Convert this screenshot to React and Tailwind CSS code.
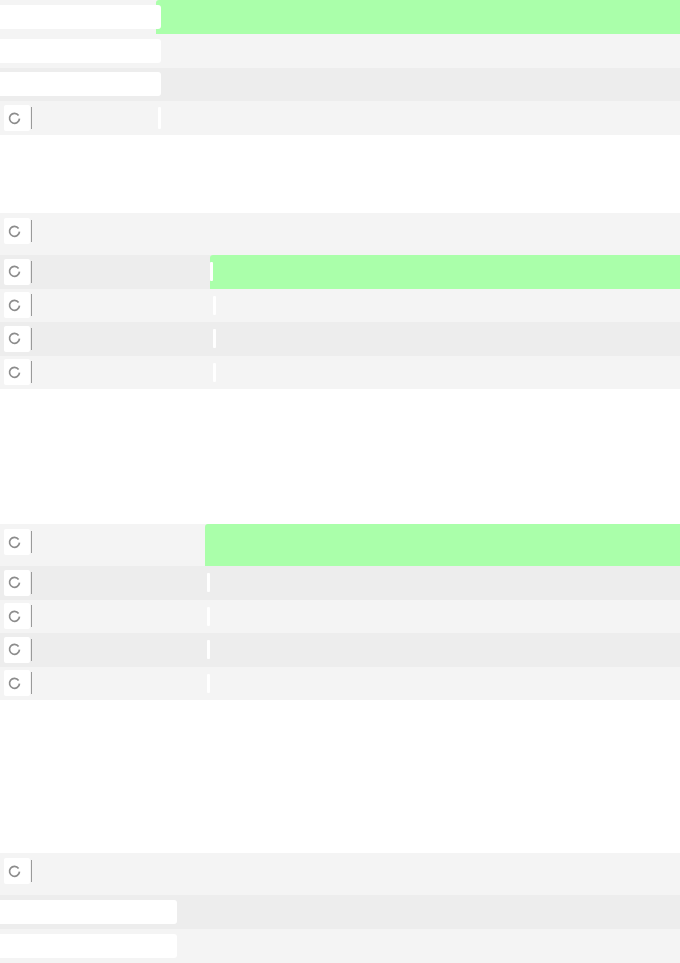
import React from 'react';

function Spinner() {
  return (
    <div className="flex items-center shrink-0">
      <div className="ml-1 w-[26px] h-[26px] bg-white rounded-[2px] flex items-center pl-[4px]">
        <svg width="13" height="13" viewBox="0 0 13 13">
          <path d="M10.6 3.4 A5 5 0 1 0 11.5 6.6" fill="none" stroke="#8c8c8c" strokeWidth="1.7" />
        </svg>
      </div>
      <div className="ml-[1px] w-px h-[22px] bg-[#9a9a9a]" />
    </div>
  );
}

function Handle({ tall }) {
  return <div className={`w-[3px] ${tall ? 'h-[22px]' : 'h-[19px]'} bg-white rounded-[1px]`} />;
}

function Row({ h = 'h-[33.5px]', bg, left, green, handle, leftW, top }) {
  return (
    <div className={`flex ${h} ${bg}`}>
      <div className={`${leftW} shrink-0 flex ${top ? 'items-start pt-[5px]' : 'items-center'}`}>{left}</div>
      <div className={`flex-1 flex items-center ${green ? 'bg-[#aaffaa] rounded-tl-[3px]' : ''}`}>
        {handle && <Handle tall={handle === 'tall'} />}
      </div>
    </div>
  );
}

const Box = ({ w }) => <div className={`${w} h-6 bg-white rounded-r-[3px] relative z-10`} />;

export default function App() {
  return (
    <div className="w-[680px] h-[963px] bg-white overflow-hidden font-['Liberation_Sans',sans-serif]">
      {/* block 1 */}
      <div className="flex h-[33.75px] bg-[#f4f4f4]">
        <div className="w-[156px] shrink-0 flex items-center">
          <Box w="w-[161px] shrink-0" />
        </div>
        <div className="flex-1 bg-[#aaffaa] rounded-tl-[3px]" />
      </div>
      <Row h="h-[33.75px]" bg="bg-[#f4f4f4]" leftW="w-[161px]" left={<Box w="w-[161px]" />} />
      <Row h="h-[33.75px]" bg="bg-[#ededed]" leftW="w-[161px]" left={<Box w="w-[161px]" />} />
      <Row h="h-[33.75px]" bg="bg-[#f4f4f4]" leftW="w-[158px]" left={<Spinner />} handle="tall" />

      <div className="h-[78px]" />

      {/* block 2 */}
      <Row h="h-[42px]" bg="bg-[#f4f4f4]" leftW="w-[212px]" left={<Spinner />} top />
      <Row bg="bg-[#ededed]" leftW="w-[210px]" left={<Spinner />} green handle="short" />
      <Row bg="bg-[#f4f4f4]" leftW="w-[213px]" left={<Spinner />} handle="short" />
      <Row bg="bg-[#ededed]" leftW="w-[213px]" left={<Spinner />} handle="short" />
      <Row bg="bg-[#f4f4f4]" leftW="w-[213px]" left={<Spinner />} handle="short" />

      <div className="h-[135px]" />

      {/* block 3 */}
      <Row h="h-[42px]" bg="bg-[#f4f4f4]" leftW="w-[205px]" left={<Spinner />} green top />
      <Row bg="bg-[#ededed]" leftW="w-[207px]" left={<Spinner />} handle="short" />
      <Row bg="bg-[#f4f4f4]" leftW="w-[207px]" left={<Spinner />} handle="short" />
      <Row bg="bg-[#ededed]" leftW="w-[207px]" left={<Spinner />} handle="short" />
      <Row bg="bg-[#f4f4f4]" leftW="w-[207px]" left={<Spinner />} handle="short" />

      <div className="h-[153px]" />

      {/* block 4 */}
      <Row h="h-[42px]" bg="bg-[#f4f4f4]" leftW="w-[177px]" left={<Spinner />} top />
      <Row h="h-[34px]" bg="bg-[#ededed]" leftW="w-[177px]" left={<Box w="w-[177px]" />} />
      <Row h="h-[34px]" bg="bg-[#f4f4f4]" leftW="w-[177px]" left={<Box w="w-[177px]" />} />
    </div>
  );
}
